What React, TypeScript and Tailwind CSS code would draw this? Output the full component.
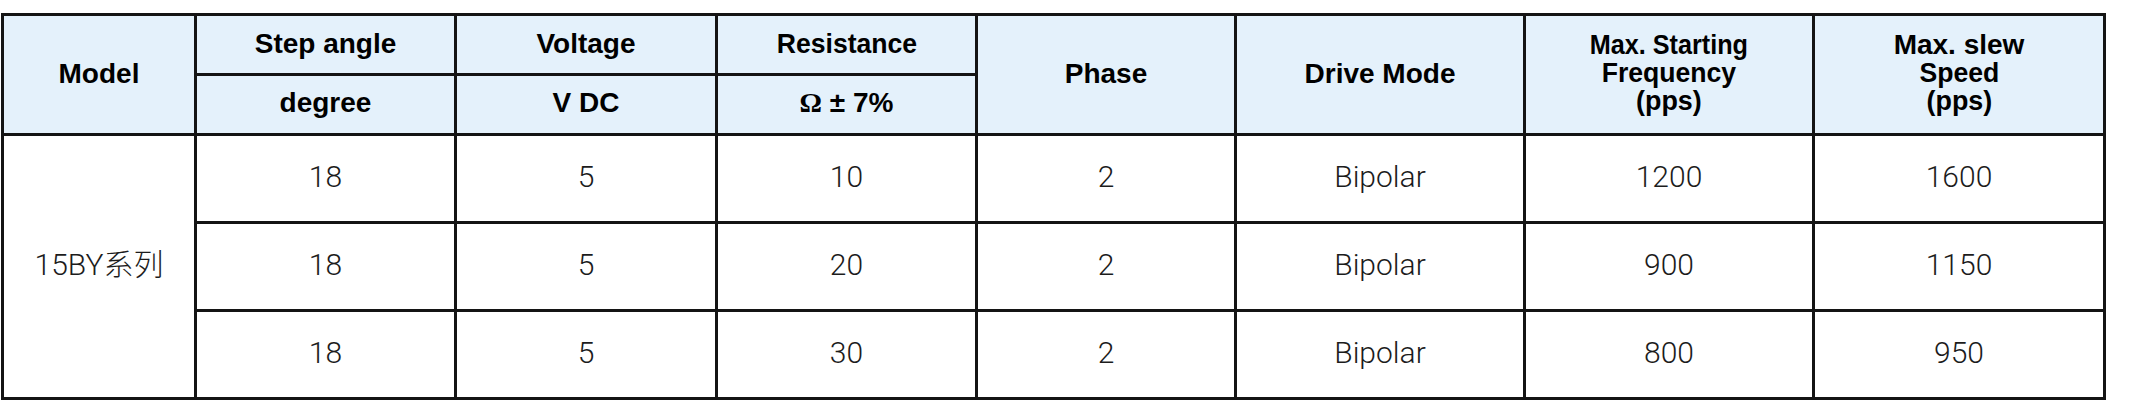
const rows = [
  { step: '18', volt: '5', res: '10', phase: '2', mode: 'Bipolar', start: '1200', slew: '1600' },
  { step: '18', volt: '5', res: '20', phase: '2', mode: 'Bipolar', start: '900', slew: '1150' },
  { step: '18', volt: '5', res: '30', phase: '2', mode: 'Bipolar', start: '800', slew: '950' },
]

const th = 'border-[3px] border-[#141414] bg-[#e4f1fb] text-center align-middle font-bold text-[28px] text-black p-0'
const td = "border-[3px] border-[#141414] text-center align-middle text-[30px] font-light text-[#1c1c1c] p-0 pb-[5px] font-['Roboto','Noto_Sans_CJK_SC',sans-serif]"

function Stack({ lines }: { lines: [string, string][] }) {
  return (
    <span className="inline-block leading-[28px]">
      {lines.map(([l, s]) => (
        <span key={l} className={`block ${s}`}>
          {l}
        </span>
      ))}
    </span>
  )
}

export default function App() {
  return (
    <div className="w-[2138px] h-[406px] bg-white pt-[13px] pl-[1px] font-['Liberation_Sans',Arial,sans-serif]">
      <table className="table-fixed border-collapse w-[2105px]">
        <colgroup>
          <col className="w-[193px]" />
          <col className="w-[260px]" />
          <col className="w-[261px]" />
          <col className="w-[260px]" />
          <col className="w-[259px]" />
          <col className="w-[289px]" />
          <col className="w-[289px]" />
          <col />
        </colgroup>
        <thead>
          <tr className="h-[60px]">
            <th rowSpan={2} className={`${th} pb-[1px]`}>Model</th>
            <th className={`${th} pb-[1px]`}>Step angle</th>
            <th className={`${th} pb-[1px]`}>Voltage</th>
            <th className={`${th} pb-[1px]`}>
              <span className="inline-block scale-x-[0.95]">Resistance</span>
            </th>
            <th rowSpan={2} className={`${th} pb-[1px]`}>Phase</th>
            <th rowSpan={2} className={`${th} pb-[1px]`}>Drive Mode</th>
            <th rowSpan={2} className={`${th} pt-[3px]`}>
              <Stack
                lines={[
                  ['Max. Starting', 'scale-x-[0.9]'],
                  ['Frequency', 'scale-x-[0.95]'],
                  ['(pps)', 'scale-x-[0.96]'],
                ]}
              />
            </th>
            <th rowSpan={2} className={`${th} pt-[3px]`}>
              <Stack
                lines={[
                  ['Max. slew', 'scale-x-[1]'],
                  ['Speed', 'scale-x-[0.95]'],
                  ['(pps)', 'scale-x-[0.96]'],
                ]}
              />
            </th>
          </tr>
          <tr className="h-[60px]">
            <th className={`${th} pb-[3px]`}>degree</th>
            <th className={`${th} pb-[3px]`}>V DC</th>
            <th className={`${th} pb-[3px]`}>
              <span className="font-['Liberation_Serif',serif]">Ω</span> ± 7%
            </th>
          </tr>
        </thead>
        <tbody>
          {rows.map((r, i) => (
            <tr key={i} className="h-[88px]">
              {i === 0 && (
                <td rowSpan={3} className={td}>
                  15BY系列
                </td>
              )}
              <td className={td}>{r.step}</td>
              <td className={td}>{r.volt}</td>
              <td className={td}>{r.res}</td>
              <td className={td}>{r.phase}</td>
              <td className={td}>{r.mode}</td>
              <td className={td}>{r.start}</td>
              <td className={td}>{r.slew}</td>
            </tr>
          ))}
        </tbody>
      </table>
    </div>
  )
}
